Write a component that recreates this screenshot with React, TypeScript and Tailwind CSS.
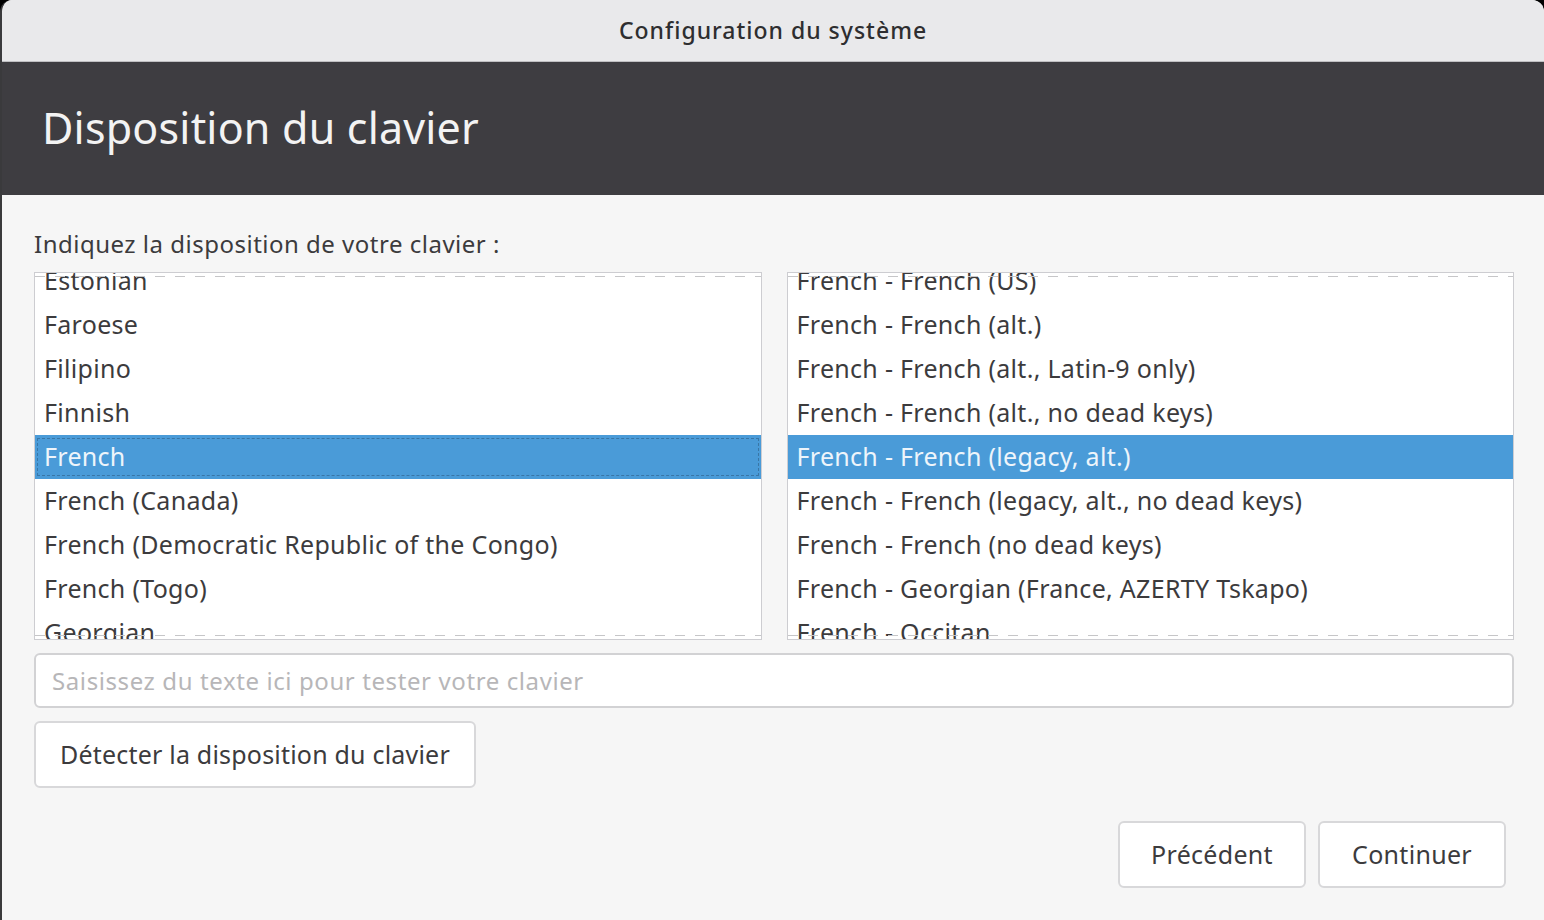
import { useState } from "react";

const LEFT = [
  "Estonian",
  "Faroese",
  "Filipino",
  "Finnish",
  "French",
  "French (Canada)",
  "French (Democratic Republic of the Congo)",
  "French (Togo)",
  "Georgian",
];

const RIGHT = [
  "French - French (US)",
  "French - French (alt.)",
  "French - French (alt., Latin-9 only)",
  "French - French (alt., no dead keys)",
  "French - French (legacy, alt.)",
  "French - French (legacy, alt., no dead keys)",
  "French - French (no dead keys)",
  "French - Georgian (France, AZERTY Tskapo)",
  "French - Occitan",
];

function ListBox({
  items,
  selected,
  focused,
  onSelect,
}: {
  items: string[];
  selected: string;
  focused?: boolean;
  onSelect: (s: string) => void;
}) {
  return (
    <div className="relative flex-1 h-[368px] overflow-hidden border border-[#cdcdd1] bg-white">
      <div className="-mt-[14px] flex flex-col">
        {items.map((it) => {
          const sel = it === selected;
          return (
            <div
              key={it}
              onClick={() => onSelect(it)}
              className={
                "h-[44px] shrink-0 flex items-center px-[9px] text-[25px] tracking-[0.3px] cursor-default " +
                (sel ? "bg-[#4a9bd8] text-[#eef5fb]" : "text-[#3c3b3d]")
              }
            >
              {sel && focused ? (
                <div className="absolute left-[2px] right-[2px] h-[38px] border border-dashed border-[#2e5f86] opacity-60" />
              ) : null}
              <span className="relative">{it}</span>
            </div>
          );
        })}
      </div>
      {/* scroll undershoot marks */}
      <div className="absolute left-0 right-0 top-[3px] h-[1px] bg-[repeating-linear-gradient(90deg,#c6c6c8_0_10px,transparent_10px_20px)]" />
      <div className="absolute left-0 right-0 bottom-[3px] h-[1px] bg-[repeating-linear-gradient(90deg,#c6c6c8_0_10px,transparent_10px_20px)]" />
    </div>
  );
}

export default function App() {
  const [layout, setLayout] = useState("French");
  const [variant, setVariant] = useState("French - French (legacy, alt.)");

  return (
    <div className="w-[1544px] h-[920px] bg-black overflow-hidden font-['Noto_Sans',sans-serif]">
      <div className="h-full rounded-t-[12px] overflow-hidden border-l-2 border-[#3a3a3c] bg-[#f6f6f6] flex flex-col">
        {/* title bar */}
        <div className="h-[62px] shrink-0 bg-[#e9e9eb] border-b border-[#bfbfc2] flex items-center justify-center">
          <span className="text-[23px] tracking-[1px] font-medium text-[#2e2e30]">Configuration du système</span>
        </div>

        {/* header */}
        <div className="h-[133px] shrink-0 bg-[#3e3d41] flex items-center px-[40px]">
          <h1 className="text-[43px] tracking-[0.2px] text-[#f3f3f3] font-normal">Disposition du clavier</h1>
        </div>

        {/* body */}
        <div className="flex-1 flex flex-col pl-[32px] pr-[30px] pt-[32px]">
          <div className="text-[24px] tracking-[0.5px] text-[#3c3b3d] leading-[34px]">
            Indiquez la disposition de votre clavier :
          </div>
          <div className="mt-[11px] flex gap-[25px]">
            <ListBox items={LEFT} selected={layout} focused onSelect={setLayout} />
            <ListBox items={RIGHT} selected={variant} onSelect={setVariant} />
          </div>

          <input
            className="mt-[13px] h-[55px] rounded-[6px] border-2 border-[#d2d2d4] bg-white px-[16px] text-[24px] tracking-[0.6px] text-[#3c3b3d] placeholder:text-[#b7b6b8] outline-none"
            placeholder="Saisissez du texte ici pour tester votre clavier"
          />

          <div className="mt-[13px]">
            <button className="h-[67px] w-[442px] rounded-[6px] border-2 border-[#d8d8da] bg-white text-[25px] tracking-[0.2px] text-[#3c3b3d]">
              Détecter la disposition du clavier
            </button>
          </div>

          <div className="mt-[33px] mr-[8px] flex justify-end gap-[12px]">
            <button className="h-[67px] w-[188px] rounded-[6px] border-2 border-[#d8d8da] bg-white text-[25px] tracking-[0.3px] text-[#3c3b3d]">
              Précédent
            </button>
            <button className="h-[67px] w-[188px] rounded-[6px] border-2 border-[#d8d8da] bg-white text-[25px] tracking-[0.3px] text-[#3c3b3d]">
              Continuer
            </button>
          </div>
        </div>
      </div>
    </div>
  );
}
